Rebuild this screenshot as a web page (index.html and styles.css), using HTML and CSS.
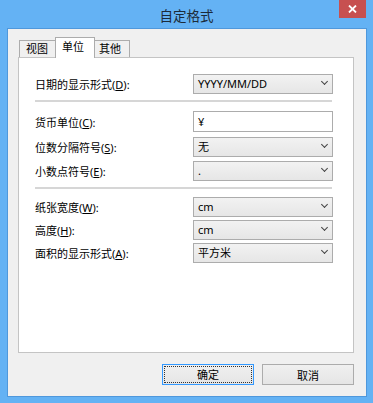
FILE: index.html
```html
<!DOCTYPE html>
<html lang="zh-CN">
<head>
  <meta charset="UTF-8">
  <title>自定格式</title>
  <link rel="stylesheet" href="styles.css">
</head>
<body>
  <div class="window">
    <div class="titlebar">
      <span class="title">自定格式</span>
      <button class="close-btn">
        <svg width="9" height="8" viewBox="0 0 9 8"><path d="M1 0.5 L8 7.5 M8 0.5 L1 7.5" stroke="#fff" stroke-width="1.8"/></svg>
      </button>
    </div>

    <div class="client">
      <div class="tabs">
        <div class="tab">视图</div>
        <div class="tab active">单位</div>
        <div class="tab">其他</div>
      </div>

      <div class="panel">
        <div class="row first">
          <label>日期的显示形式(<u>D</u>):</label>
          <div class="select">YYYY/MM/DD<span class="arrow"></span></div>
        </div>

        <hr class="sep">

        <div class="row input-row">
          <label>货币单位(<u>C</u>):</label>
          <div class="textbox">¥</div>
        </div>
        <div class="row">
          <label>位数分隔符号(<u>S</u>):</label>
          <div class="select">无<span class="arrow"></span></div>
        </div>
        <div class="row">
          <label>小数点符号(<u>E</u>):</label>
          <div class="select">.<span class="arrow"></span></div>
        </div>

        <hr class="sep second">

        <div class="row tight">
          <label>纸张宽度(<u>W</u>):</label>
          <div class="select">cm<span class="arrow"></span></div>
        </div>
        <div class="row tight">
          <label>高度(<u>H</u>):</label>
          <div class="select">cm<span class="arrow"></span></div>
        </div>
        <div class="row tight">
          <label>面积的显示形式(<u>A</u>):</label>
          <div class="select">平方米<span class="arrow"></span></div>
        </div>
      </div>

      <div class="buttons">
        <button class="btn default"><span>确定</span></button>
        <button class="btn">取消</button>
      </div>
    </div>
  </div>
</body>
</html>
```

FILE: styles.css
```css
body {
  margin: 0;
  font-family: "Noto Sans", "Noto Sans CJK SC", sans-serif;
  font-size: 11px;
  color: #000;
  overflow: hidden;
}

.window {
  width: 373px;
  height: 403px;
  background: #64b2f4;
  display: flex;
  flex-direction: column;
}

.titlebar {
  height: 28px;
  position: relative;
  display: flex;
  align-items: center;
  justify-content: center;
}

.title {
  font-size: 13.5px;
  color: #1c2b3a;
  margin-top: 1px;
}

.close-btn {
  position: absolute;
  top: 0;
  left: 339px;
  width: 27px;
  height: 18px;
  border: none;
  padding: 0;
  background: #c75050;
  display: flex;
  align-items: center;
  justify-content: center;
}

.client {
  margin: 0 6px 6px 7px;
  height: 369px;
  box-sizing: border-box;
  border: 1px solid #4f98dc;
  background: #f0f0f0;
  padding: 9px 12px 0 10px;
}

/* tabs */
.tabs {
  display: flex;
  align-items: flex-end;
  height: 19px;
  padding-left: 1px;
  position: relative;
  z-index: 1;
}

.tab {
  height: 16px;
  line-height: 16px;
  padding: 0 6px;
  width: 24px;
  border: 1px solid #acacac;
  border-bottom: none;
  background: #f0f0f0;
  margin-bottom: 0;
}

.tab + .tab {
  margin-left: -1px;
}

.tab.active {
  height: 20px;
  line-height: 18px;
  width: 26px;
  background: #fff;
  margin-bottom: -1px;
  margin-left: -2px;
  margin-right: -2px;
  position: relative;
  z-index: 2;
}

.panel {
  height: 296px;
  box-sizing: border-box;
  background: #fff;
  border: 1px solid #c4c4c4;
  padding: 16px 19px 0 16px;
  position: relative;
}

.row {
  display: grid;
  grid-template-columns: 158px 140px;
  align-items: center;
  height: 20px;
  margin-bottom: 4px;
}

.row.first {
  margin-bottom: 0;
}

.row.tight {
  margin-bottom: 3px;
}

.row.input-row {
  height: 21px;
  margin-bottom: 5px;
}

.row label u {
  text-decoration: underline;
}

.sep {
  border: none;
  border-top: 2px solid #d6d6d6;
  margin: 6px 2px 9px 0;
}

.sep.second {
  margin: 6px 2px 8px 0;
}

.select {
  height: 20px;
  box-sizing: border-box;
  border: 1px solid #acacac;
  background: linear-gradient(#f2f2f2, #e6e6e6);
  padding: 0 4px;
  line-height: 18px;
  position: relative;
}

.arrow {
  position: absolute;
  right: 5px;
  top: 7px;
  width: 4px;
  height: 4px;
  border-right: 1.5px solid #444;
  border-bottom: 1.5px solid #444;
  transform: rotate(45deg);
  top: 4px;
}

.textbox {
  height: 21px;
  box-sizing: border-box;
  border: 1px solid #acacac;
  background: #fff;
  padding: 0 4px;
  line-height: 19px;
}

.buttons {
  display: flex;
  justify-content: flex-end;
  gap: 8px;
  margin-top: 11px;
  padding-right: 0;
}

.btn {
  width: 92px;
  height: 21px;
  box-sizing: border-box;
  border: 1px solid #acacac;
  background: linear-gradient(#f0f0f0, #e5e5e5);
  font-family: inherit;
  font-size: 11px;
  padding: 0;
}

.btn.default {
  border-color: #3399ff;
  padding: 1px;
}

.btn.default span {
  display: block;
  height: 100%;
  box-sizing: border-box;
  border: 1px dotted #333;
  line-height: 15px;
}
```
